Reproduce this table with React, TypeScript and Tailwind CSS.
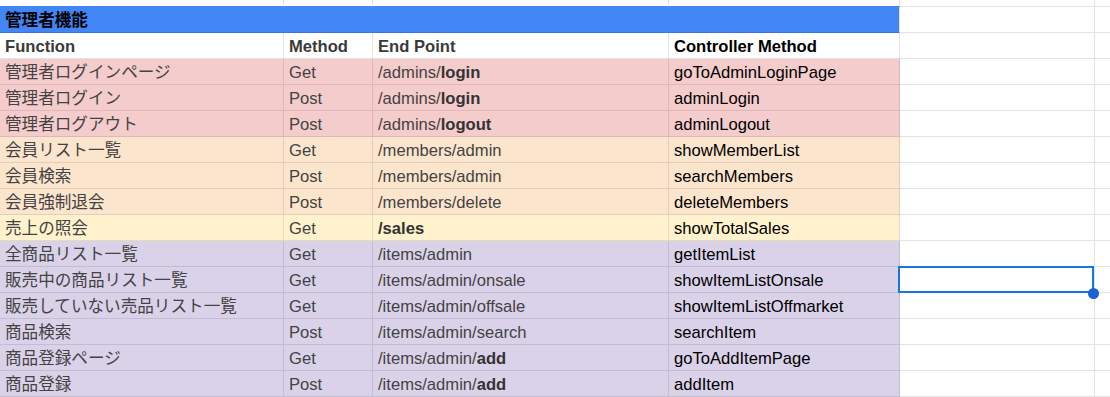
import React from "react";

type Theme = "pink" | "orange" | "yellow" | "purple";

const themes: Record<Theme, { bg: string; line: string }> = {
  pink: { bg: "bg-[#f4cccc]", line: "border-[#dcb8b8]" },
  orange: { bg: "bg-[#fce5cd]", line: "border-[#e3cebb]" },
  yellow: { bg: "bg-[#fff2cc]", line: "border-[#e6dab8]" },
  purple: { bg: "bg-[#d9d2e9]", line: "border-[#c3bdd2]" },
};

type Row = {
  theme: Theme;
  fn: string;
  method: string;
  path: string;
  bold?: string;
  ctrl: string;
  selected?: boolean;
};

const rows: Row[] = [
  { theme: "pink", fn: "管理者ログインページ", method: "Get", path: "/admins/", bold: "login", ctrl: "goToAdminLoginPage" },
  { theme: "pink", fn: "管理者ログイン", method: "Post", path: "/admins/", bold: "login", ctrl: "adminLogin" },
  { theme: "pink", fn: "管理者ログアウト", method: "Post", path: "/admins/", bold: "logout", ctrl: "adminLogout" },
  { theme: "orange", fn: "会員リスト一覧", method: "Get", path: "/members/admin", ctrl: "showMemberList" },
  { theme: "orange", fn: "会員検索", method: "Post", path: "/members/admin", ctrl: "searchMembers" },
  { theme: "orange", fn: "会員強制退会", method: "Post", path: "/members/delete", ctrl: "deleteMembers" },
  { theme: "yellow", fn: "売上の照会", method: "Get", path: "", bold: "/sales", ctrl: "showTotalSales" },
  { theme: "purple", fn: "全商品リスト一覧", method: "Get", path: "/items/admin", ctrl: "getItemList" },
  { theme: "purple", fn: "販売中の商品リスト一覧", method: "Get", path: "/items/admin/onsale", ctrl: "showItemListOnsale", selected: true },
  { theme: "purple", fn: "販売していない売品リスト一覧", method: "Get", path: "/items/admin/offsale", ctrl: "showItemListOffmarket" },
  { theme: "purple", fn: "商品検索", method: "Post", path: "/items/admin/search", ctrl: "searchItem" },
  { theme: "purple", fn: "商品登録ページ", method: "Get", path: "/items/admin/", bold: "add", ctrl: "goToAddItemPage" },
  { theme: "purple", fn: "商品登録", method: "Post", path: "/items/admin/", bold: "add", ctrl: "addItem" },
];

const gridCols = "grid grid-cols-[284px_89px_296px_231px_195px_1fr]";
const cellBase = "h-[26px] border-r border-b pl-[5px] pt-[1px] leading-[25px] whitespace-nowrap overflow-hidden";

export default function App() {
  return (
    <div
      className="w-[1110px] h-[397px] overflow-hidden bg-white text-[16.6px]"
      style={{ fontFamily: "'Liberation Sans', Arial, 'Noto Sans CJK JP', sans-serif" }}
    >
      {/* top partial row */}
      <div className={gridCols}>
        <div className="h-[7px] border-r border-b border-r-[#e2e2e2] border-b-[#4285f4]" />
        <div className="h-[7px] border-r border-b border-r-[#e2e2e2] border-b-[#4285f4]" />
        <div className="h-[7px] border-r border-b border-r-[#e2e2e2] border-b-[#4285f4]" />
        <div className="h-[7px] border-r border-b border-r-[#e2e2e2] border-b-[#4285f4]" />
        <div className="h-[7px] border-r border-b border-[#e2e2e2]" />
        <div className="h-[7px] border-b border-[#e2e2e2]" />
      </div>

      {/* title row */}
      <div className={gridCols}>
        <div className="col-span-4 h-[26px] bg-[#4285f4] border-b border-b-[#3a78de] border-r border-r-[#e2e2e2] pl-[5px] pt-[1px] leading-[25px] font-bold text-black">
          管理者機能
        </div>
        <div className={`${cellBase} border-[#e2e2e2]`} />
        <div className="h-[26px] border-b border-[#e2e2e2]" />
      </div>

      {/* header row */}
      <div className={gridCols}>
        <div className={`${cellBase} border-[#e2e2e2] font-bold text-[#3a3a3a]`}>Function</div>
        <div className={`${cellBase} border-[#e2e2e2] font-bold text-[#3a3a3a]`}>Method</div>
        <div className={`${cellBase} border-[#e2e2e2] font-bold text-[#3a3a3a]`}>End Point</div>
        <div className={`${cellBase} border-[#e2e2e2] font-bold text-black`}>Controller Method</div>
        <div className={`${cellBase} border-[#e2e2e2]`} />
        <div className="h-[26px] border-b border-[#e2e2e2]" />
      </div>

      {rows.map((r, i) => {
        const t = themes[r.theme];
        return (
          <div key={i} className={gridCols}>
            <div className={`${cellBase} ${t.bg} ${t.line} text-[#434343]`}>{r.fn}</div>
            <div className={`${cellBase} ${t.bg} ${t.line} text-[#434343]`}>{r.method}</div>
            <div className={`${cellBase} ${t.bg} ${t.line} text-[#434343]`}>
              {r.path}
              {r.bold && <span className="font-bold text-[#333333]">{r.bold}</span>}
            </div>
            <div className={`${cellBase} ${t.bg} ${t.line} text-black`}>{r.ctrl}</div>
            <div className={`${cellBase} border-[#e2e2e2] relative overflow-visible`}>
              {r.selected && (
                <>
                  <div className="absolute left-[-2px] top-[-1px] w-[196px] h-[27px] border-2 border-[#1a73e8]" />
                  <div className="absolute left-[188px] top-[21px] w-[11px] h-[11px] rounded-full bg-[#1a62d6] z-10" />
                </>
              )}
            </div>
            <div className="h-[26px] border-b border-[#e2e2e2]" />
          </div>
        );
      })}
    </div>
  );
}
